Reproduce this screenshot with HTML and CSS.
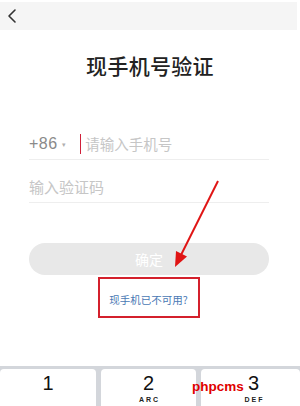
FILE: index.html
```html
<!DOCTYPE html>
<html lang="zh">
<head>
<meta charset="utf-8">
<link rel="stylesheet" href="styles.css">
</head>
<body>
<div class="page">
  <div class="topbar">
    <svg class="back" width="24" height="28" viewBox="0 0 24 28"><path d="M15 8 L9 14 L15 20" fill="none" stroke="#333" stroke-width="1.6" stroke-linecap="round" stroke-linejoin="round"/></svg>
  </div>
  <h1 class="title">现手机号验证</h1>
  <div class="form">
    <div class="row phone">
      <span class="cc">+86</span><span class="caret">▾</span>
      <span class="cursor"></span><span class="ph">请输入手机号</span>
    </div>
    <div class="row code"><span class="ph">输入验证码</span></div>
    <div class="btn">确定</div>
    <div class="linkwrap"><div class="linkbox">现手机已不可用?</div></div>
  </div>
  <div class="keyboard">
    <div class="key"><span class="num">1</span></div>
    <div class="key"><span class="num">2</span><span class="sub">ARC</span></div>
    <div class="key key3"><span class="num">3</span><span class="sub">DEF</span></div>
  </div>
  <svg class="arrow" width="300" height="406" viewBox="0 0 300 406">
    <line x1="218" y1="181" x2="181" y2="255" stroke="#e01414" stroke-width="2"/>
    <polygon points="175,267 187,256.5 176,251" fill="#e01414"/>
  </svg>
  <div class="watermark">phpcms</div>
</div>
</body>
</html>
```
FILE: styles.css
```css
html, body { margin: 0; padding: 0; background: #fff; }
.page {
  position: relative;
  width: 300px;
  height: 406px;
  overflow: hidden;
  display: flex;
  flex-direction: column;
  font-family: "Noto Sans CJK SC", "Liberation Sans", sans-serif;
}
.topbar {
  margin-top: 2px;
  height: 28px;
  width: 297px;
  background: #f5f5f5;
  flex: none;
}
.back { display: block; }
.title {
  margin: 21px 0 0;
  height: 28px;
  line-height: 28px;
  text-align: center;
  font-size: 21px;
  font-weight: 500;
  color: #222;
  letter-spacing: 0.3px;
}
.form {
  margin-top: 48px;
  padding: 0 31px 0 29px;
  flex: none;
}
.row {
  border-bottom: 1px solid #eeeeee;
  display: flex;
  align-items: center;
}
.phone { height: 31px; padding-top: 1px; }
.code { height: 42px; align-items: flex-start; }
.code .ph { margin-top: 17px; line-height: 20px; font-size: 15px; margin-left: 0; }
.cc {
  font-family: "Liberation Sans", sans-serif;
  font-size: 16px;
  color: #8a8a8a;
  letter-spacing: 0.5px;
}
.caret {
  font-size: 7px;
  color: #b0b0b0;
  margin-left: 4px;
  margin-top: 1px;
}
.cursor {
  width: 1.5px;
  height: 20px;
  background: #d0203a;
  margin-left: 14px;
}
.ph {
  font-size: 14.5px;
  color: #c6c6c6;
  margin-left: 4px;
}
.btn {
  margin-top: 40px;
  height: 32px;
  border-radius: 16px;
  background: #e8e8e8;
  color: #fff;
  font-size: 14px;
  display: flex;
  align-items: center;
  justify-content: center;
}
.linkwrap {
  display: flex;
  justify-content: center;
  margin-top: 2px;
  padding-right: 1px;
}
.linkbox {
  width: 98px;
  height: 33px;
  padding-top: 4px;
  border: 2px solid #d4202c;
  display: flex;
  align-items: center;
  justify-content: center;
  font-size: 10.5px;
  color: #4a78b4;
}
.keyboard {
  margin-top: auto;
  height: 37px;
  background: #d3d6db;
  padding-top: 3px;
  display: grid;
  grid-template-columns: 96px 95px 99px;
  column-gap: 5px;
  flex: none;
}
.key {
  background: #fff;
  border-radius: 4px 4px 0 0;
  display: flex;
  flex-direction: column;
  align-items: center;
  font-family: "Liberation Sans", sans-serif;
}
.key3 { padding-left: 6px; }
.num {
  font-size: 20px;
  line-height: 20px;
  margin-top: 4px;
  color: #111;
}
.sub {
  font-size: 7px;
  font-weight: bold;
  letter-spacing: 2px;
  margin-left: 2px;
  line-height: 8px;
  margin-top: 3px;
  color: #222;
}
.arrow { position: absolute; left: 0; top: 0; pointer-events: none; }
.watermark {
  position: absolute;
  left: 192px;
  top: 379px;
  font-family: "Liberation Sans", sans-serif;
  font-weight: bold;
  font-size: 13.5px;
  line-height: 16px;
  color: #e00000;
}
```
